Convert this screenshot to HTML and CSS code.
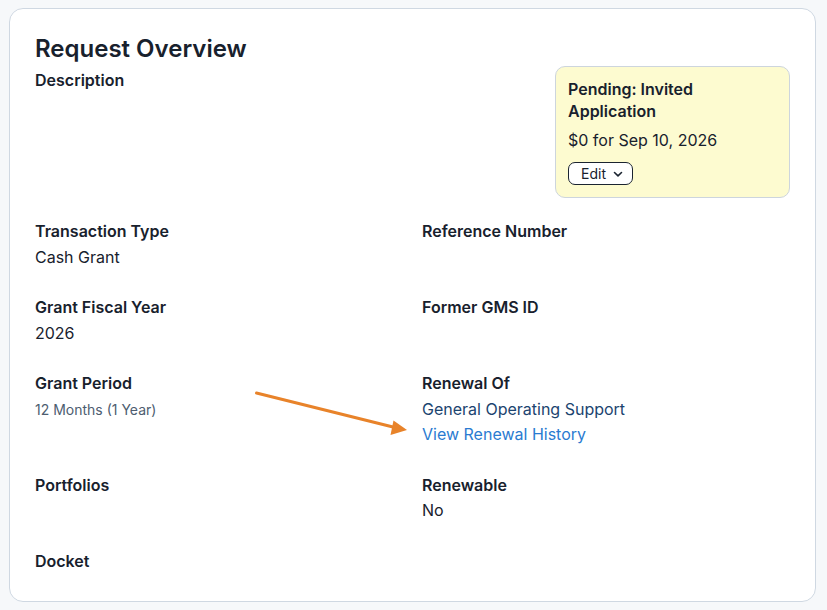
FILE: index.html
```html
<!DOCTYPE html>
<html lang="en">
<head>
  <meta charset="UTF-8" />
  <meta name="viewport" content="width=device-width, initial-scale=1.0" />
  <title>Request Overview</title>
  <link rel="stylesheet" href="styles.css">
</head>
<body>
  <div class="card">
    <h2 class="card-title">Request Overview</h2>

    <!-- Description row with the status box on the right -->
    <div class="top-row">
      <div class="field-label description">Description</div>
      <div class="status-box">
        <div class="status-title">Pending: Invited Application</div>
        <div class="status-amount">$0 for Sep 10, 2026</div>
        <button class="edit-button">Edit
          <svg class="chevron" width="10" height="10" viewBox="0 0 10 10">
            <path d="M1.5 3.5 L5 6.8 L8.5 3.5" fill="none" stroke="#1b2430" stroke-width="1.6" stroke-linecap="round" stroke-linejoin="round"/>
          </svg>
        </button>
      </div>
    </div>

    <div class="fields">
      <div class="field">
        <div class="field-label">Transaction Type</div>
        <div class="field-value">Cash Grant</div>
      </div>
      <div class="field">
        <div class="field-label">Reference Number</div>
      </div>

      <div class="field">
        <div class="field-label">Grant Fiscal Year</div>
        <div class="field-value">2026</div>
      </div>
      <div class="field">
        <div class="field-label">Former GMS ID</div>
      </div>

      <div class="field">
        <div class="field-label">Grant Period</div>
        <div class="field-value"><span class="muted">12 Months (1 Year)</span></div>
      </div>
      <div class="field">
        <div class="field-label">Renewal Of</div>
        <div class="field-value"><a class="link-dark" href="#">General Operating Support</a></div>
        <div class="field-value"><a class="link" href="#">View Renewal History</a></div>
      </div>

      <div class="field">
        <div class="field-label">Portfolios</div>
      </div>
      <div class="field">
        <div class="field-label">Renewable</div>
        <div class="field-value">No</div>
      </div>

      <div class="field">
        <div class="field-label">Docket</div>
      </div>
    </div>

    <!-- annotation arrow -->
    <svg class="annotation" width="170" height="65" viewBox="0 0 170 65">
      <line x1="6.5" y1="9" x2="145" y2="43.5" stroke="#e8832a" stroke-width="3" stroke-linecap="round"/>
      <polygon points="157,46 143.5,36.5 140.5,51" fill="#e8832a"/>
    </svg>
  </div>
</body>
</html>
```

FILE: styles.css
```css
/* Global styles */
body {
  margin: 8px 11px 8px 9px;
  background: #f6f8fa;
  font-family: Inter, "Noto Sans", sans-serif;
  color: #18212d;
}

.card {
  position: relative;
  background: #fff;
  border: 1px solid #cfd8e2;
  border-radius: 14px;
  padding: 24px 25px 27px 25px;
}

.card-title {
  margin: 0;
  font-size: 24px;
  line-height: 32px;
  font-weight: 600;
}

/* Description + status box */
.top-row {
  display: flex;
  justify-content: space-between;
  align-items: flex-start;
  margin: 1px 0 21px 0;
}
.description {
  padding-top: 2px;
}

.status-box {
  width: 235px;
  box-sizing: border-box;
  background: #fdfbd0;
  border: 1px solid #cdd5dd;
  border-radius: 10px;
  padding: 11px 12px 12px 12px;
}
.status-title {
  font-size: 16px;
  font-weight: 600;
  line-height: 22px;
}
.status-amount {
  font-size: 16px;
  line-height: 24px;
  margin-top: 6px;
}
.edit-button {
  margin-top: 10px;
  height: 23px;
  display: flex;
  align-items: center;
  gap: 7px;
  padding: 0 9px 0 12px;
  background: #fff;
  border: 1px solid #1b2430;
  border-radius: 7px;
  font-family: Inter, "Noto Sans", sans-serif;
  font-size: 14px;
  color: #18212d;
  cursor: pointer;
}

/* Two column field grid */
.fields {
  display: grid;
  grid-template-columns: 1fr 1fr;
  column-gap: 19px;
  row-gap: 25px;
}
.field-label {
  font-size: 16px;
  line-height: 25.5px;
  font-weight: 600;
}
.field-value {
  font-size: 16px;
  line-height: 25.5px;
}
.muted {
  font-size: 14px;
  color: #4d5d70;
}
.link-dark {
  color: #1b446f;
  text-decoration: none;
}
.link {
  color: #2a7bd1;
  text-decoration: none;
}

/* Arrow drawn over the card */
.annotation {
  position: absolute;
  left: 240px;
  top: 375px;
}
```
